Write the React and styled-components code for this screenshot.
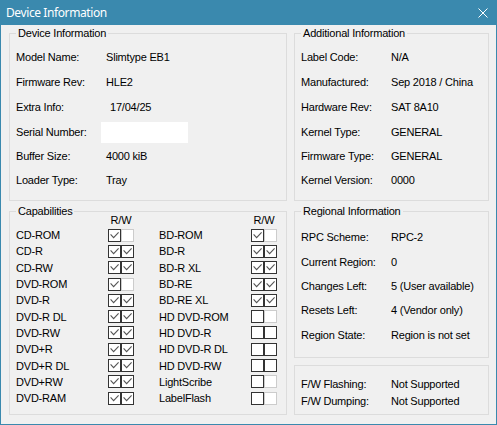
import React from 'react';
import styled, { createGlobalStyle } from 'styled-components';

const GlobalStyle = createGlobalStyle`
  html, body {
    margin: 0;
    padding: 0;
    background: #f0f0f0;
  }
`;

const accent = '#3a89ae';

const Window = styled.div`
  width: 497px;
  height: 425px;
  box-sizing: border-box;
  border: 1px solid ${accent};
  border-top: 0;
  background: #f0f0f0;
  display: flex;
  flex-direction: column;
  font-family: 'Liberation Sans', Arial, sans-serif;
  font-size: 11px;
  letter-spacing: -0.2px;
  color: #000;
`;

const TitleBar = styled.div`
  height: 25px;
  flex: none;
  background: ${accent};
  color: #fff;
  display: flex;
  align-items: center;
  justify-content: space-between;
  padding: 0 8px 0 5px;
  font-family: 'Noto Sans', 'Open Sans', sans-serif;
  font-size: 12px;
  letter-spacing: -0.4px;
`;

const CloseIcon = styled.svg`
  width: 10px;
  height: 10px;
  display: block;
`;

const Body = styled.div`
  flex: 1;
  display: grid;
  grid-template-columns: 278px 195px;
  grid-template-rows: 168px 1fr;
  gap: 10px 7px;
  padding: 8px 7px 9px 8px;
  min-height: 0;
`;

const Stack = styled.div`
  display: flex;
  flex-direction: column;
  gap: 7px;
  min-height: 0;
`;

const Group = styled.div`
  position: relative;
  box-sizing: border-box;
  border: 1px solid #dcdcdc;
  flex: ${p => p.$fill ? '1' : 'none'};
  height: ${p => p.$height || 'auto'};
`;

const Legend = styled.span`
  position: absolute;
  top: -8px;
  left: 6px;
  padding: 0 2px;
  line-height: 14px;
  background: #f0f0f0;
  white-space: nowrap;
`;

const InfoGrid = styled.div`
  display: grid;
  grid-template-columns: 90px 1fr;
  grid-template-rows: ${p => p.$rows};
  padding: ${p => p.$top}px 0 0 6px;
  align-items: center;
  white-space: nowrap;
`;

const Label = styled.div`
  line-height: 14px;
`;

const Value = styled.div`
  line-height: 14px;
  margin-left: ${p => p.$indent || 0}px;
`;

const SerialBox = styled.div`
  align-self: end;
  width: 87px;
  height: 21px;
  margin: 0 0 1px -5px;
  background: #fff;
`;

const CapsWrap = styled.div`
  display: flex;
  gap: 25px;
  padding: 2px 0 0 6px;
`;

const CapColumn = styled.div`
  display: grid;
  grid-template-columns: 92px 26px;
  grid-template-rows: 13px;
  grid-auto-rows: 16.3px;
  align-items: center;
  white-space: nowrap;
`;

const RWHeader = styled.div`
  grid-column: 2;
  text-align: center;
  line-height: 13px;
`;

const CapName = styled.div`
  line-height: 14px;
`;

const Checks = styled.div`
  display: flex;
`;

const Box = styled.span`
  width: 13px;
  height: 13px;
  box-sizing: border-box;
  border: 1px solid ${p => (p.$dim ? '#cccccc' : '#333333')};
  background: #fff;
  display: block;
`;

const CheckMark = styled.svg`
  width: 11px;
  height: 11px;
  display: block;
`;

const CheckBox = ({ state }) => (
  <Box $dim={state < 0}>
    {state > 0 && (
      <CheckMark viewBox="0 0 11 11">
        <path d="M1.6 4.4 L4.6 7.6 L9.6 2.4" fill="none" stroke="#555555" strokeWidth="1.1" />
      </CheckMark>
    )}
  </Box>
);

const deviceInfo = [
  ['Model Name:', 'Slimtype EB1'],
  ['Firmware Rev:', 'HLE2'],
  ['Extra Info:', '17/04/25', 4],
  ['Serial Number:', null],
  ['Buffer Size:', '4000 kiB'],
  ['Loader Type:', 'Tray'],
];

const additionalInfo = [
  ['Label Code:', 'N/A'],
  ['Manufactured:', 'Sep 2018 / China'],
  ['Hardware Rev:', 'SAT 8A10'],
  ['Kernel Type:', 'GENERAL'],
  ['Firmware Type:', 'GENERAL'],
  ['Kernel Version:', '0000'],
];

const regionalInfo = [
  ['RPC Scheme:', 'RPC-2'],
  ['Current Region:', '0'],
  ['Changes Left:', '5 (User available)'],
  ['Resets Left:', '4 (Vendor only)'],
  ['Region State:', 'Region is not set'],
];

const flashInfo = [
  ['F/W Flashing:', 'Not Supported'],
  ['F/W Dumping:', 'Not Supported'],
];

// 1 = checked, 0 = empty, -1 = not applicable (greyed)
const capsLeft = [
  ['CD-ROM', 1, -1],
  ['CD-R', 1, 1],
  ['CD-RW', 1, 1],
  ['DVD-ROM', 1, -1],
  ['DVD-R', 1, 1],
  ['DVD-R DL', 1, 1],
  ['DVD-RW', 1, 1],
  ['DVD+R', 1, 1],
  ['DVD+R DL', 1, 1],
  ['DVD+RW', 1, 1],
  ['DVD-RAM', 1, 1],
];

const capsRight = [
  ['BD-ROM', 1, -1],
  ['BD-R', 1, 1],
  ['BD-R XL', 1, 1],
  ['BD-RE', 1, 1],
  ['BD-RE XL', 1, 1],
  ['HD DVD-ROM', 0, -1],
  ['HD DVD-R', 0, 0],
  ['HD DVD-R DL', 0, 0],
  ['HD DVD-RW', 0, 0],
  ['LightScribe', 0, -1],
  ['LabelFlash', 0, -1],
];

const InfoRows = ({ items }) =>
  items.map(([label, value, indent]) => (
    <React.Fragment key={label}>
      <Label>{label}</Label>
      {value === null ? <SerialBox /> : <Value $indent={indent}>{value}</Value>}
    </React.Fragment>
  ));

const CapList = ({ items }) => (
  <CapColumn>
    <RWHeader>R/W</RWHeader>
    {items.map(([name, r, w]) => (
      <React.Fragment key={name}>
        <CapName>{name}</CapName>
        <Checks>
          <CheckBox state={r} />
          <CheckBox state={w} />
        </Checks>
      </React.Fragment>
    ))}
  </CapColumn>
);

const sixRows = '24px 25px 25px 25px 24px 24px';

const App = () => (
  <>
    <GlobalStyle />
    <Window>
      <TitleBar>
        <span>Device Information</span>
        <CloseIcon viewBox="0 0 10 10">
          <path d="M0.5 0.5 L9.5 9.5 M9.5 0.5 L0.5 9.5" stroke="#fff" strokeWidth="1" />
        </CloseIcon>
      </TitleBar>
      <Body>
        <Group>
          <Legend>Device Information</Legend>
          <InfoGrid $rows={sixRows} $top={11}>
            <InfoRows items={deviceInfo} />
          </InfoGrid>
        </Group>
        <Group>
          <Legend>Additional Information</Legend>
          <InfoGrid $rows={sixRows} $top={11}>
            <InfoRows items={additionalInfo} />
          </InfoGrid>
        </Group>
        <Group>
          <Legend>Capabilities</Legend>
          <CapsWrap>
            <CapList items={capsLeft} />
            <CapList items={capsRight} />
          </CapsWrap>
        </Group>
        <Stack>
          <Group $height="147px">
            <Legend>Regional Information</Legend>
            <InfoGrid $rows="24px 25px 24px 24px 25px" $top={13}>
              <InfoRows items={regionalInfo} />
            </InfoGrid>
          </Group>
          <Group $fill>
            <InfoGrid $rows="17px 17px" $top={9}>
              <InfoRows items={flashInfo} />
            </InfoGrid>
          </Group>
        </Stack>
      </Body>
    </Window>
  </>
);

export default App;
